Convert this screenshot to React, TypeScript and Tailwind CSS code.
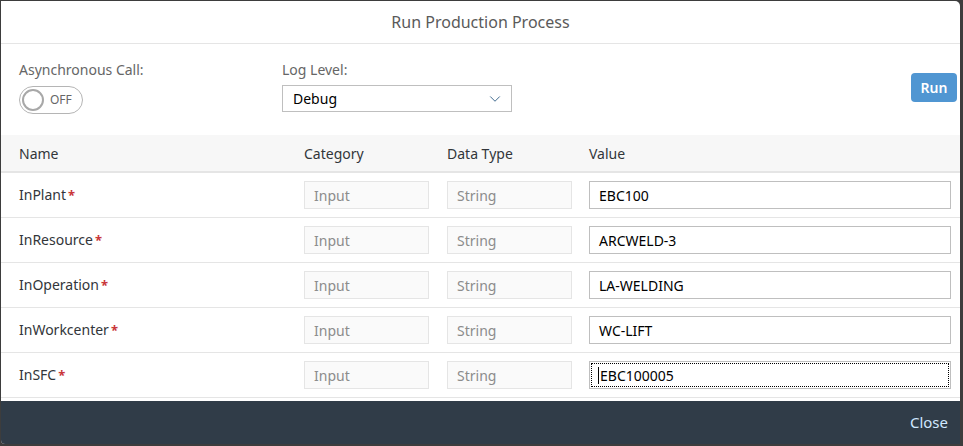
import { ChevronDown } from "lucide-react";

type Param = { name: string; value: string; focused?: boolean };

const params: Param[] = [
  { name: "InPlant", value: "EBC100" },
  { name: "InResource", value: "ARCWELD-3" },
  { name: "InOperation", value: "LA-WELDING" },
  { name: "InWorkcenter", value: "WC-LIFT" },
  { name: "InSFC", value: "EBC100005", focused: true },
];

function Switch() {
  return (
    <div className="mt-[7px] flex h-[28px] w-[64px] items-center rounded-full border border-[#b5b5b5] bg-white pl-[2px]">
      <div className="h-[22px] w-[22px] rounded-full border-2 border-[#a8a8a8] bg-white" />
      <span className="ml-[6px] text-[12px] text-[#666]">OFF</span>
    </div>
  );
}

function ReadOnlyField({ text }: { text: string }) {
  return (
    <div className="flex h-[28px] w-[125px] items-center border border-[#e5e5e5] bg-[#fafafa] px-[9px] text-[14px] text-[#8c8c8c]">
      {text}
    </div>
  );
}

function ParamRow({ p }: { p: Param }) {
  return (
    <div className="flex h-[45px] items-center border-b border-[#e5e5e5]">
      <div className="w-[303px] pl-[18px] text-[14px] text-[#32363a]">
        {p.name}
        <span className="ml-[2px] text-[13px] font-bold text-[#c9363a]">*</span>
      </div>
      <div className="w-[143px]">
        <ReadOnlyField text="Input" />
      </div>
      <div className="w-[142px]">
        <ReadOnlyField text="String" />
      </div>
      <div
        className={
          p.focused
            ? "flex h-[28px] w-[362px] items-center border border-[#bfbfbf] bg-white px-[8px] text-[14px] text-black outline-1 outline-dotted outline-offset-[-3px] outline-black"
            : "flex h-[28px] w-[362px] items-center border border-[#bfbfbf] bg-white px-[9px] text-[14px] text-black"
        }
      >
        {p.focused && <span className="mr-px h-[17px] w-px bg-black" />}
        {p.value}
      </div>
    </div>
  );
}

export default function App() {
  return (
    <div
      className="h-[446px] w-[963px] overflow-hidden bg-[#3d3d3d] pl-px pt-px"
      style={{ fontFamily: '"Noto Sans", "Open Sans", sans-serif' }}
    >
      <div className="flex h-[443px] w-[959px] flex-col overflow-hidden rounded-tr-[5px] rounded-bl-[4px] bg-white">
        <div className="flex h-[43px] shrink-0 items-center justify-center border-b border-[#e5e5e5] text-[16px] text-[#5a5a5a]">
          Run Production Process
        </div>

        <div className="flex h-[91px] shrink-0 pt-[17px]">
          <div className="w-[281px] pl-[18px]">
            <div className="text-[14px] leading-[18px] text-[#666]">Asynchronous Call:</div>
            <Switch />
          </div>
          <div className="w-[230px]">
            <div className="text-[14px] leading-[18px] text-[#666]">Log Level:</div>
            <div className="mt-[6px] flex h-[27px] items-center justify-between border border-[#bfbfbf] bg-white pl-[10px] pr-[7px]">
              <span className="text-[14px] text-black">Debug</span>
              <ChevronDown size={18} strokeWidth={1.25} className="text-[#346187]" />
            </div>
          </div>
          <div className="flex flex-1 justify-end pr-[3px] pt-[12px]">
            <button
              type="button"
              className="h-[29px] w-[46px] rounded-[4px] bg-[#5096d2] text-[14px] font-semibold text-white"
            >
              Run
            </button>
          </div>
        </div>

        <div className="flex h-[38px] shrink-0 items-center border-b-2 border-[#e5e5e5] bg-[#f7f7f7] text-[14px] text-[#32363a]">
          <div className="w-[303px] pl-[18px]">Name</div>
          <div className="w-[143px]">Category</div>
          <div className="w-[142px]">Data Type</div>
          <div>Value</div>
        </div>

        {params.map((p) => (
          <ParamRow key={p.name} p={p} />
        ))}

        <div className="mt-[3px] flex flex-1 items-center justify-end bg-[#303c48] pr-[12px] text-[15px] text-[#d1e8ff]">
          Close
        </div>
      </div>
    </div>
  );
}
